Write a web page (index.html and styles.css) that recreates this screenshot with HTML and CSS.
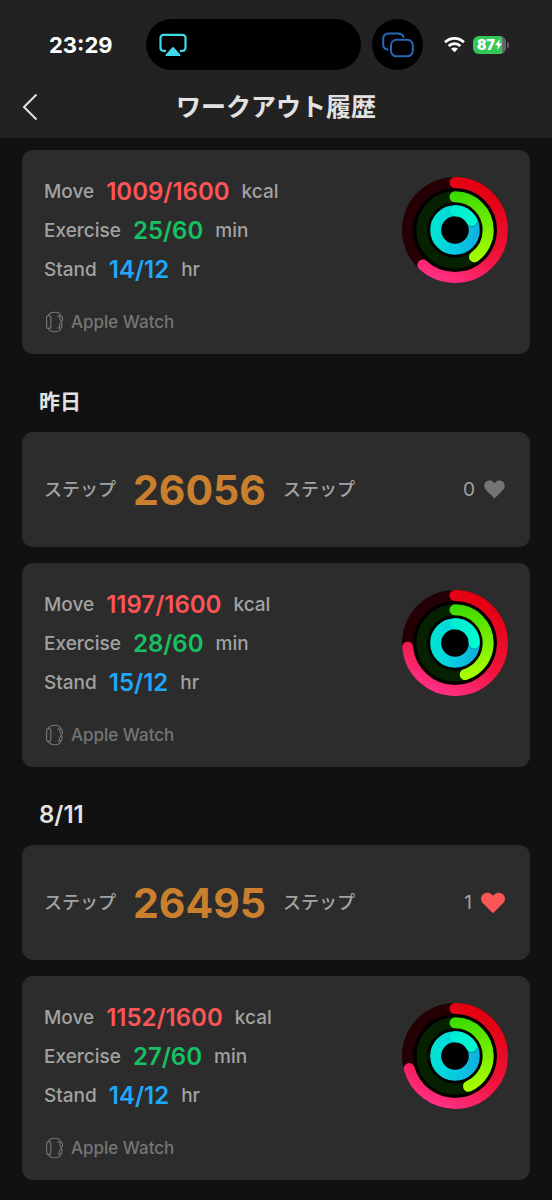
FILE: index.html
```html
<!DOCTYPE html>
<html lang="ja">
<head>
<meta charset="utf-8">
<meta name="viewport" content="width=device-width, initial-scale=1">
<title>ワークアウト履歴</title>
<link rel="stylesheet" href="styles.css">
</head>
<body>
<svg class="defs" aria-hidden="true">
  <defs>
    <linearGradient id="move" gradientUnits="userSpaceOnUse" x1="65" y1="2" x2="22" y2="98">
      <stop offset="0" stop-color="#e3000f"/><stop offset=".6" stop-color="#f0153f"/><stop offset="1" stop-color="#ff3088"/>
    </linearGradient>
    <linearGradient id="exercise" gradientUnits="userSpaceOnUse" x1="53" y1="14" x2="64" y2="88">
      <stop offset="0" stop-color="#38d900"/><stop offset="1" stop-color="#acff00"/>
    </linearGradient>
    <linearGradient id="stand" gradientUnits="userSpaceOnUse" x1="76" y1="50" x2="34" y2="42">
      <stop offset="0" stop-color="#0fb3df"/><stop offset=".45" stop-color="#06cbe0"/><stop offset="1" stop-color="#00e3d3"/>
    </linearGradient>
    <linearGradient id="stand-top" gradientUnits="userSpaceOnUse" x1="36" y1="36" x2="74" y2="48">
      <stop offset="0" stop-color="#00e6d4"/><stop offset="1" stop-color="#00fccf"/>
    </linearGradient>
    <symbol id="ring-base" viewBox="0 0 106 106">
      <circle cx="53" cy="53" r="53" fill="#240004"/>
      <circle cx="53" cy="53" r="42" fill="#000"/>
      <circle cx="53" cy="53" r="33.2" fill="none" stroke="#062100" stroke-width="11"/>
      <circle cx="53" cy="53" r="19.3" fill="none" stroke="url(#stand)" stroke-width="11"/>
    </symbol>
    <symbol id="watch" viewBox="0 0 20 22">
      <g fill="none" stroke="currentColor" stroke-width="1.1" stroke-linejoin="round" stroke-linecap="round">
        <rect x="2.6" y="4.600" width="4.200" height="12.800" rx="2"/>
        <path d="M4.500 4.200C5.700 2 8.300 1.300 11 1.300c3.500 0 5.300 1.500 5.800 3.500l1.700 1.900v2.300L17.200 11l.8 2v2.600l-1.200 1.700c-.7 2.200-2.500 3.400-5.700 3.400-3 0-5.400-.8-6.600-3"/>
        <path d="M13.500 5h2.800c-1.300 1.500-.7 3 .9 5.200M17.200 11.500c-1.800 2-2.700 3.500-1.200 5.500h-2"/>
      </g>
    </symbol>
    <symbol id="heart" viewBox="0 0 24 22">
      <path fill="currentColor" d="M12 21.300 2.200 11.600C-.7 8.700-.5 4.600 1.900 2.400 4.600 0 8.300.1 10.500 2.300L12 3.800l1.500-1.500C15.700.1 19.400 0 22.100 2.400c2.400 2.200 2.600 6.300-.3 9.200z"/>
    </symbol>
  </defs>
</svg>

<header class="header">
  <div class="status">
    <time class="clock">23:29</time>
    <div class="island">
      <svg class="airplay" viewBox="0 0 28 24" role="img" aria-label="AirPlay">
        <path d="M7 17.800H4.500a3 3 0 0 1-3-3v-10a3 3 0 0 1 3-3h19a3 3 0 0 1 3 3v10a3 3 0 0 1-3 3H21" fill="none" stroke="#3fdbe8" stroke-width="2.200"/>
        <path d="M13.100 14.500 6.600 21.800c-.5.600-.2 1.200.5 1.200h13.800c.7 0 1-.6.500-1.200l-6.500-7.300q-.9-1-1.800 0z" fill="#3fdbe8"/>
      </svg>
    </div>
    <div class="bubble">
      <svg class="mirror" viewBox="0 0 32 26" role="img" aria-label="Sharing">
        <g fill="none" stroke="#2769b8" stroke-width="2" stroke-linecap="round">
          <path d="M5.500 17.500C2.600 17 1.200 15 1.200 12.500V7c0-3.600 2-5.500 5.500-5.500h9c3 0 5 1 5.800 3.400"/>
          <rect x="9" y="7.800" width="21.800" height="16.500" rx="5.500"/>
        </g>
      </svg>
    </div>
    <svg class="wifi" viewBox="0 0 22 17" role="img" aria-label="Wi-Fi">
      <g fill="none" stroke="#fff" stroke-width="2.900">
        <path d="M1.100 6.200a14 14 0 0 1 19.800 0"/>
        <path d="M4.900 10a8.600 8.600 0 0 1 12.200 0"/>
      </g>
      <path d="M11 16.600 7.400 13a5.100 5.100 0 0 1 7.200 0z" fill="#fff"/>
    </svg>
    <div class="battery"><span class="charge">87<svg class="bolt" viewBox="0 0 7 11" aria-hidden="true"><path fill="#fff" d="M5 0 0 6.200h3L2 11l5-6.500H4z"/></svg></span></div>
  </div>
  <nav class="navbar">
    <button class="back" type="button" aria-label="戻る">
      <svg viewBox="0 0 16 28" aria-hidden="true"><path d="M14.500 1.500 2 14l12.500 12.500" fill="none" stroke="currentColor" stroke-width="2"/></svg>
    </button>
    <h1 class="title">ワークアウト履歴</h1>
  </nav>
</header>

<main class="feed">
  <article class="card activity">
    <div class="stats">
      <p class="stat">Move <strong class="move">1009/1600</strong> kcal</p>
      <p class="stat">Exercise <strong class="exercise">25/60</strong> min</p>
      <p class="stat">Stand <strong class="stand">14/12</strong> hr</p>
      <p class="source"><svg class="watch" aria-hidden="true"><use href="#watch"/></svg>Apple Watch</p>
    </div>
    <svg class="rings" viewBox="0 0 106 106" role="img" aria-label="アクティビティリング">
      <use href="#ring-base"/>
      <g class="arcs">
        <path class="arc-move" pathLength="1600" stroke-dasharray="989 1600" d="M53 5.500a47.500 47.500 0 0 1 0 95a47.500 47.500 0 0 1 0-95"/>
        <path class="arc-exercise" pathLength="60" stroke-dasharray="24 60" d="M53 19.800a33.200 33.200 0 0 1 0 66.400a33.200 33.200 0 0 1 0-66.400"/>
        <path class="arc-shadow" d="M53 33.700A19.300 19.300 0 0 1 70.100 44.700"/>
        <path class="arc-stand" d="M53 33.700A19.300 19.300 0 0 1 69.700 43.400"/>
      </g>
    </svg>
  </article>

  <h2 class="day">昨日</h2>
  <article class="card steps">
    <p class="count"><span class="unit">ステップ</span><strong class="total">26056</strong><span class="unit">ステップ</span></p>
    <button class="like" type="button" aria-label="いいね 0">0<svg class="heart" viewBox="0 0 24 22" aria-hidden="true"><use href="#heart"/></svg></button>
  </article>
  <article class="card activity">
    <div class="stats">
      <p class="stat">Move <strong class="move">1197/1600</strong> kcal</p>
      <p class="stat">Exercise <strong class="exercise">28/60</strong> min</p>
      <p class="stat">Stand <strong class="stand">15/12</strong> hr</p>
      <p class="source"><svg class="watch" aria-hidden="true"><use href="#watch"/></svg>Apple Watch</p>
    </div>
    <svg class="rings" viewBox="0 0 106 106" role="img" aria-label="アクティビティリング">
      <use href="#ring-base"/>
      <g class="arcs">
        <path class="arc-move" pathLength="1600" stroke-dasharray="1177 1600" d="M53 5.500a47.500 47.500 0 0 1 0 95a47.500 47.500 0 0 1 0-95"/>
        <path class="arc-exercise" pathLength="60" stroke-dasharray="27 60" d="M53 19.800a33.200 33.200 0 0 1 0 66.400a33.200 33.200 0 0 1 0-66.400"/>
        <path class="arc-shadow" d="M53 33.700A19.300 19.300 0 0 1 72.200 54.300"/>
        <path class="arc-stand" d="M53 33.700A19.300 19.300 0 0 1 72.300 53"/>
      </g>
    </svg>
  </article>

  <h2 class="day date">8/11</h2>
  <article class="card steps">
    <p class="count"><span class="unit">ステップ</span><strong class="total">26495</strong><span class="unit">ステップ</span></p>
    <button class="like liked" type="button" aria-label="いいね 1" aria-pressed="true">1<svg class="heart" viewBox="0 0 24 22" aria-hidden="true"><use href="#heart"/></svg></button>
  </article>
  <article class="card activity">
    <div class="stats">
      <p class="stat">Move <strong class="move">1152/1600</strong> kcal</p>
      <p class="stat">Exercise <strong class="exercise">27/60</strong> min</p>
      <p class="stat">Stand <strong class="stand">14/12</strong> hr</p>
      <p class="source"><svg class="watch" aria-hidden="true"><use href="#watch"/></svg>Apple Watch</p>
    </div>
    <svg class="rings" viewBox="0 0 106 106" role="img" aria-label="アクティビティリング">
      <use href="#ring-base"/>
      <g class="arcs">
        <path class="arc-move" pathLength="1600" stroke-dasharray="1132 1600" d="M53 5.500a47.500 47.500 0 0 1 0 95a47.500 47.500 0 0 1 0-95"/>
        <path class="arc-exercise" pathLength="60" stroke-dasharray="26 60" d="M53 19.800a33.200 33.200 0 0 1 0 66.400a33.200 33.200 0 0 1 0-66.400"/>
        <path class="arc-shadow" d="M53 33.700A19.300 19.300 0 0 1 70.100 44.700"/>
        <path class="arc-stand" d="M53 33.700A19.300 19.300 0 0 1 69.700 43.400"/>
      </g>
    </svg>
  </article>
</main>
</body>
</html>
```

FILE: styles.css
```css
* { box-sizing: border-box; }

body {
  margin: 0;
  background: #111;
  color: #a2a2a2;
  font-family: Inter, "Noto Sans CJK JP", sans-serif;
  font-size: 19px;
  font-weight: 500;
}

h1, h2, p { margin: 0; }
svg { display: block; flex: none; }
.defs { position: absolute; width: 0; height: 0; }

button {
  border: 0;
  padding: 0;
  background: none;
  color: inherit;
  font: inherit;
}

.header { background: #222; }

.status {
  display: flex;
  align-items: center;
  padding: 19px 43px 0 49px;
}

.clock {
  width: 97px;
  color: #fff;
  font-size: 22px;
  font-weight: 700;
}

.island {
  flex: 1;
  display: flex;
  align-items: center;
  height: 51px;
  padding-left: 13px;
  border-radius: 26px;
  background: #000;
}

.airplay { width: 28px; height: 24px; }

.bubble {
  display: flex;
  align-items: center;
  justify-content: center;
  width: 51px;
  height: 51px;
  margin: 0 21px 0 11px;
  border-radius: 50%;
  background: #000;
}

.mirror { width: 32px; height: 26px; }
.wifi { width: 21px; height: 17px; }

.battery {
  display: flex;
  align-items: center;
  gap: 1px;
  margin-left: 8px;
}

.battery::after {
  content: "";
  width: 2px;
  height: 6px;
  border-radius: 0 2px 2px 0;
  background: #645d63;
}

.charge {
  display: flex;
  align-items: center;
  justify-content: center;
  width: 33px;
  height: 18px;
  border-radius: 6px;
  background: linear-gradient(90deg, #34c759 87%, #666 87%);
  color: #fff;
  font-size: 14px;
  font-weight: 900;
}

.bolt { width: 7px; height: 11px; }

.navbar {
  display: grid;
  grid-template-columns: 32px 1fr 32px;
  align-items: center;
  height: 68px;
  padding: 6px 22px 0;
}

.back svg { width: 16px; height: 28px; color: #e2e2e2; }

.title {
  color: #e2e2e2;
  font-size: 25px;
  font-weight: 700;
  line-height: 36px;
  text-align: center;
}

.feed { padding: 12px 22px 20px; }

.card {
  display: flex;
  justify-content: space-between;
  padding: 22px;
  border-radius: 11px;
  background: #2c2c2c;
}

.card + .card { margin-top: 16px; }

.activity { padding-bottom: 20px; }

.stat {
  display: flex;
  align-items: center;
  gap: 12px;
  line-height: 39px;
}

.stat strong { font-size: 24px; font-weight: 600; }
.stat .move { color: #fc5556; }
.stat .exercise { color: #15c161; }
.stat .stand { color: #1ca9fc; }

.source {
  display: flex;
  align-items: center;
  gap: 7px;
  margin-top: 21px;
  color: #757575;
  font-size: 17px;
  line-height: 24px;
}

.watch { width: 20px; height: 22px; }

.rings { width: 106px; height: 106px; margin-top: 5px; }

.arcs path { fill: none; stroke-width: 11; stroke-linecap: round; }
.arcs .arc-move { stroke: url(#move); }
.arcs .arc-exercise { stroke: url(#exercise); }
.arcs .arc-shadow { stroke: #08808c; stroke-opacity: .6; }
.arcs .arc-stand { stroke: url(#stand-top); }

.day {
  margin: 33px 17px 15px;
  color: #e2e2e2;
  font-size: 21px;
  font-weight: 600;
  line-height: 30px;
}

.date { font-size: 24px; }

.steps { align-items: center; height: 115px; }

.count { display: flex; align-items: center; gap: 17px; }
.unit { padding-bottom: 3px; font-size: 18px; }

.total {
  color: #ca7f2f;
  font-size: 41px;
  font-weight: 700;
  line-height: 50px;
}

.like {
  display: flex;
  align-items: center;
  gap: 9px;
  margin-right: 3px;
  font-weight: 400;
}

.heart { width: 21px; height: 19px; color: #757575; }
.liked .heart { width: 24px; height: 22px; color: #fc5556; }
```
